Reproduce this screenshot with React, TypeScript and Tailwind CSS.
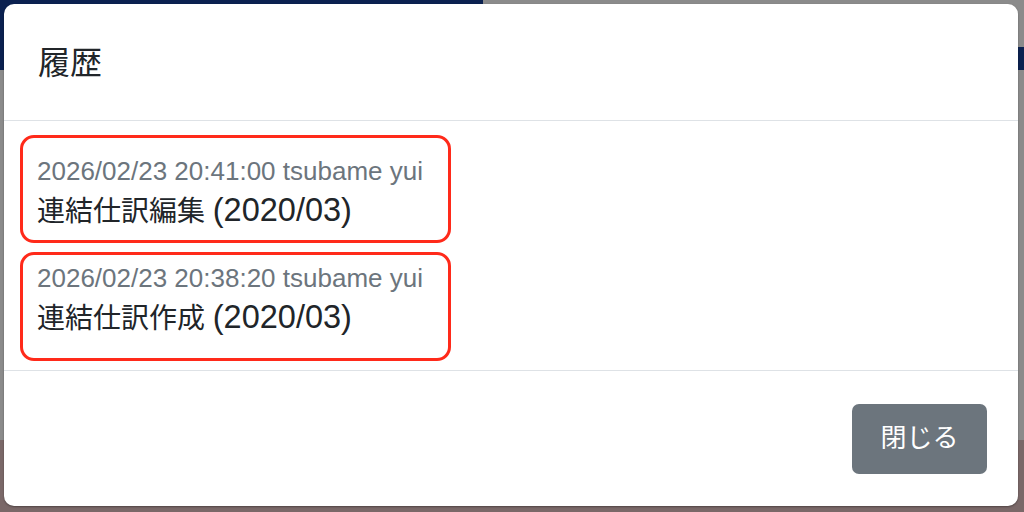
const history = [
  { at: "2026/02/23 20:41:00", user: "tsubame yui", action: "連結仕訳編集", period: "(2020/03)" },
  { at: "2026/02/23 20:38:20", user: "tsubame yui", action: "連結仕訳作成", period: "(2020/03)" },
];

function HistoryItem({ at, user, action, period }: { at: string; user: string; action: string; period: string }) {
  return (
    <li className="h-[107px] pl-[33px]">
      <p className="h-[34px] leading-[34px] text-[26px] text-[#6c757d] whitespace-nowrap">
        {at} {user}
      </p>
      <p className="h-[44px] leading-[44px] text-[28px] text-[#212529] whitespace-nowrap">
        {action} <span className="text-[32.5px]">{period}</span>
      </p>
    </li>
  );
}

export default function App() {
  return (
    <div
      className="relative w-[1024px] h-[512px] overflow-hidden bg-[#8b8b8b]"
      style={{ fontFamily: '"Liberation Sans", "Noto Sans CJK JP", sans-serif' }}
    >
      {/* page behind the backdrop */}
      <div className="absolute left-0 top-0 w-[483px] h-[70px] bg-[#0b2150]" />
      <div className="absolute right-0 top-[47px] w-[8px] h-[23px] bg-[#0b2150]" />
      <div className="absolute left-0 bottom-0 w-full h-[72px] bg-[#7a6868]" />

      <div className="relative p-[4px] pr-[6px] pb-[6px] h-full">
        <div className="flex flex-col h-full bg-white rounded-[10px] shadow-[0_1px_2px_rgba(0,0,0,0.35)]">
          <div className="h-[117px] shrink-0 flex items-center pl-[34px] pt-[2px] border-b border-[#dee2e6]">
            <h2 className="text-[32px] text-[#212529]">履歴</h2>
          </div>

          <div className="relative h-[250px] shrink-0 border-b border-[#dee2e6]">
            <ul className="pt-[33px]">
              {history.map((h) => (
                <HistoryItem key={h.at} {...h} />
              ))}
            </ul>
            {/* red annotation frames */}
            <div className="absolute left-[16px] top-[14px] w-[431px] h-[108px] rounded-[14px] border-[3px] border-[#ff2a1a]" />
            <div className="absolute left-[16px] top-[131px] w-[431px] h-[109px] rounded-[14px] border-[3px] border-[#ff2a1a]" />
          </div>

          <div className="flex-1 flex items-center justify-end pr-[31px]">
            <button className="w-[135px] h-[70px] rounded-[7px] bg-[#6c757d] text-white text-[26px]">
              閉じる
            </button>
          </div>
        </div>
      </div>
    </div>
  );
}
